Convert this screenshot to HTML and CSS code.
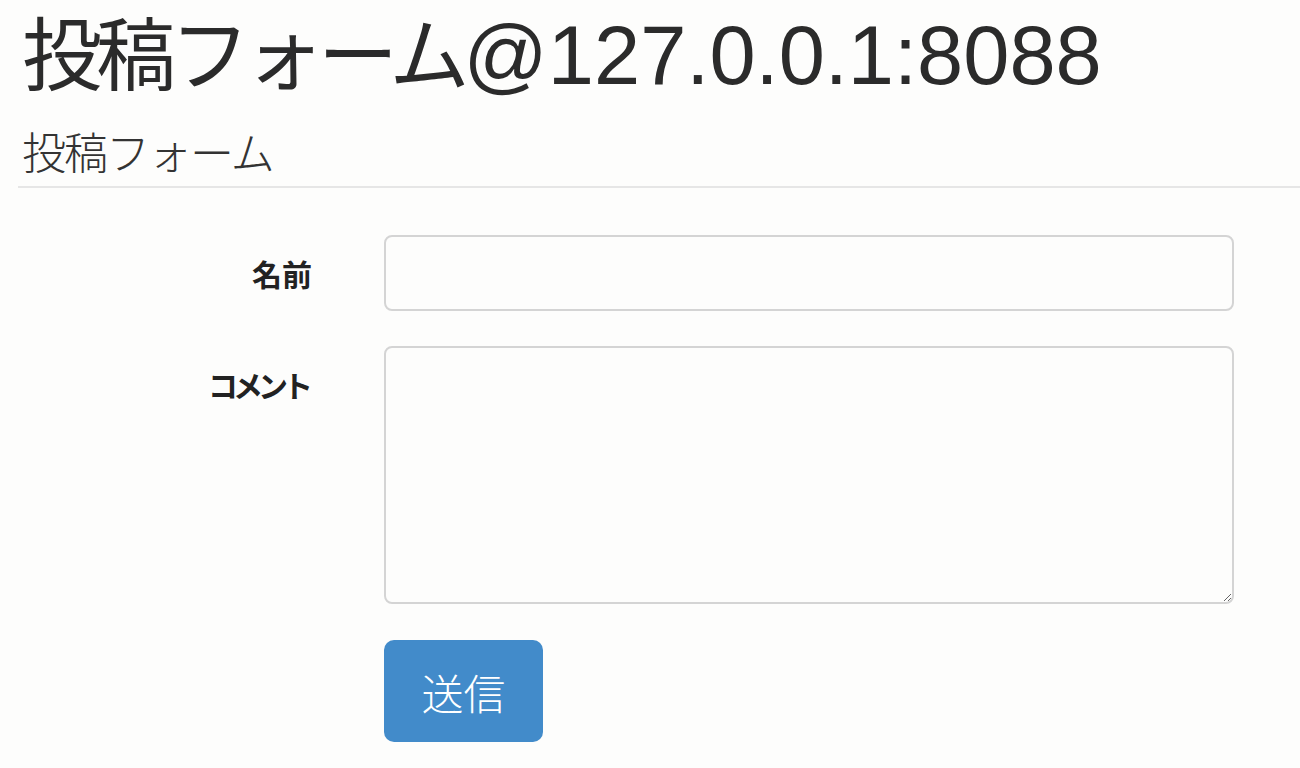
FILE: index.html
```html
<!DOCTYPE html>
<html lang="ja">
<head>
<meta charset="utf-8">
<title>投稿フォーム</title>
<link rel="stylesheet" href="styles.css">
</head>
<body>
<div class="page">
  <h1 class="title"><span class="title-jp">投稿フォーム</span>@127.0.0.1:8088</h1>
  <form class="form">
    <div class="legend"><span class="legend-text">投稿フォーム</span></div>
    <div class="row row-name">
      <label class="label" for="name">名前</label>
      <div class="ctrl"><input id="name" class="input" type="text"></div>
    </div>
    <div class="row row-comment">
      <label class="label label-kana" for="comment">コメント</label>
      <div class="ctrl"><textarea id="comment" class="textarea"></textarea></div>
    </div>
    <div class="row row-submit">
      <div class="label"></div>
      <div class="ctrl"><button class="btn" type="button">送信</button></div>
    </div>
  </form>
</div>
</body>
</html>
```

FILE: styles.css
```css
* { box-sizing: border-box; }
html, body { margin: 0; padding: 0; }
body {
  background: #fdfdfc;
  color: #333;
  font-family: "Liberation Sans", "Noto Sans CJK JP", sans-serif;
  width: 1300px;
  height: 768px;
  overflow: hidden;
}
.page {
  padding: 0 0 0 18px;
}
.title {
  margin: 0;
  padding-left: 4px;
  font-size: 83px;
  font-weight: 400;
  line-height: 98px;
  height: 98px;
  color: #2b2b2b;
  white-space: nowrap;
}
.title-jp {
  display: inline-block;
  font-family: "Noto Sans CJK JP", sans-serif;
  font-size: 80px;
  line-height: 98px;
  letter-spacing: -6px;
  padding-right: 8px;
  margin-right: -8px;
}
.form { margin: 0; }
.legend {
  margin-top: 27px;
  padding-left: 4px;
  border-bottom: 2px solid #e6e6e6;
  height: 63px;
}
.legend-text {
  display: inline-block;
  font-family: "Noto Sans CJK JP", sans-serif;
  font-size: 44px;
  font-weight: 300;
  letter-spacing: -2px;
  line-height: 52px;
  padding-right: 4px;
  color: #333;
}
.row {
  display: flex;
  align-items: flex-start;
}
.row-name { margin-top: 47px; }
.row-comment { margin-top: 35px; }
.row-submit { margin-top: 36px; }
.label {
  width: 366px;
  padding-right: 72px;
  text-align: right;
  font-family: "Noto Sans CJK JP", sans-serif;
  font-weight: 700;
  font-size: 30px;
  line-height: 76px;
  color: #222;
  flex: none;
}
.label-kana {
  letter-spacing: -5px;
  padding-right: 76px;
}
.ctrl { flex: none; width: 850px; }
.input, .textarea {
  display: block;
  width: 850px;
  border: 2px solid #d4d4d4;
  border-radius: 8px;
  background: #fdfdfc;
  font-size: 28px;
  padding: 12px 24px;
}
.input { height: 76px; }
.textarea { height: 258px; resize: vertical; }
.btn {
  width: 159px;
  height: 102px;
  border: none;
  border-radius: 10px;
  background: #428bca;
  color: #fff;
  font-family: "Noto Sans CJK JP", sans-serif;
  font-size: 42px;
  font-weight: 300;
  padding: 0;
}
```
